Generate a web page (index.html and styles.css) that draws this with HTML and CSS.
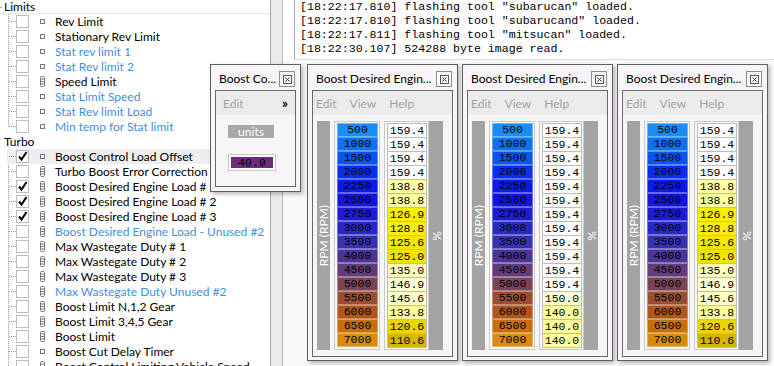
FILE: index.html
```html
<!DOCTYPE html>
<html lang="en">
<head>
  <meta charset="UTF-8" />
  <title>Table editor</title>
  <link rel="stylesheet" href="styles.css">
</head>
<body>
<div class="app">

  <!-- Дерево таблиц -->
  <div class="tree">
    <div class="hdr hdr-first">Limits</div>
    <div class="grp">
      <div class="row"><span class="cb"></span><svg class="ico" width="5" height="5"><rect x=".5" y=".5" width="4" height="4" fill="#eef2f6" stroke="#6d7d8e"/></svg>Rev Limit</div>
      <div class="row"><span class="cb"></span><svg class="ico" width="5" height="5"><rect x=".5" y=".5" width="4" height="4" fill="#eef2f6" stroke="#6d7d8e"/></svg>Stationary Rev Limit</div>
      <div class="row blue"><span class="cb"></span><svg class="ico" width="5" height="5"><rect x=".5" y=".5" width="4" height="4" fill="#eef2f6" stroke="#6d7d8e"/></svg>Stat rev limit 1</div>
      <div class="row blue"><span class="cb"></span><svg class="ico" width="5" height="5"><rect x=".5" y=".5" width="4" height="4" fill="#eef2f6" stroke="#6d7d8e"/></svg>Stat Rev limit 2</div>
      <div class="row"><span class="cb"></span><svg class="ico" width="5" height="11"><rect x=".5" y=".5" width="4" height="10" rx="1" fill="#fff" stroke="#777"/><path d="M1 3h3M1 5.5h3M1 8h3" stroke="#777"/></svg>Speed Limit</div>
      <div class="row blue"><span class="cb"></span><svg class="ico" width="5" height="5"><rect x=".5" y=".5" width="4" height="4" fill="#eef2f6" stroke="#6d7d8e"/></svg>Stat Limit Speed</div>
      <div class="row blue"><span class="cb"></span><svg class="ico" width="5" height="5"><rect x=".5" y=".5" width="4" height="4" fill="#eef2f6" stroke="#6d7d8e"/></svg>Stat Rev limit Load</div>
      <div class="row blue"><span class="cb"></span><svg class="ico" width="5" height="5"><rect x=".5" y=".5" width="4" height="4" fill="#eef2f6" stroke="#6d7d8e"/></svg>Min temp for Stat limit</div>
    </div>
    <div class="hdr">Turbo</div>
    <div class="grp">
      <div class="row sel"><span class="cb"><svg width="11" height="11"><path d="M2 5.5l2.5 3L9.5 1" fill="none" stroke="#000" stroke-width="2"/></svg></span><svg class="ico" width="5" height="5"><rect x=".5" y=".5" width="4" height="4" fill="#eef2f6" stroke="#6d7d8e"/></svg>Boost Control Load Offset</div>
      <div class="row"><span class="cb"></span><svg class="ico" width="5" height="11"><rect x=".5" y=".5" width="4" height="10" rx="1" fill="#fff" stroke="#777"/><path d="M1 3h3M1 5.5h3M1 8h3" stroke="#777"/></svg>Turbo Boost Error Correction</div>
      <div class="row"><span class="cb"><svg width="11" height="11"><path d="M2 5.5l2.5 3L9.5 1" fill="none" stroke="#000" stroke-width="2"/></svg></span><svg class="ico" width="5" height="11"><rect x=".5" y=".5" width="4" height="10" rx="1" fill="#fff" stroke="#777"/><path d="M1 3h3M1 5.5h3M1 8h3" stroke="#777"/></svg>Boost Desired Engine Load # 1</div>
      <div class="row"><span class="cb"><svg width="11" height="11"><path d="M2 5.5l2.5 3L9.5 1" fill="none" stroke="#000" stroke-width="2"/></svg></span><svg class="ico" width="5" height="11"><rect x=".5" y=".5" width="4" height="10" rx="1" fill="#fff" stroke="#777"/><path d="M1 3h3M1 5.5h3M1 8h3" stroke="#777"/></svg>Boost Desired Engine Load # 2</div>
      <div class="row"><span class="cb"><svg width="11" height="11"><path d="M2 5.5l2.5 3L9.5 1" fill="none" stroke="#000" stroke-width="2"/></svg></span><svg class="ico" width="5" height="11"><rect x=".5" y=".5" width="4" height="10" rx="1" fill="#fff" stroke="#777"/><path d="M1 3h3M1 5.5h3M1 8h3" stroke="#777"/></svg>Boost Desired Engine Load # 3</div>
      <div class="row blue"><span class="cb"></span><svg class="ico" width="5" height="11"><rect x=".5" y=".5" width="4" height="10" rx="1" fill="#fff" stroke="#777"/><path d="M1 3h3M1 5.5h3M1 8h3" stroke="#777"/></svg>Boost Desired Engine Load - Unused #2</div>
      <div class="row"><span class="cb"></span><svg class="ico" width="5" height="11"><rect x=".5" y=".5" width="4" height="10" rx="1" fill="#fff" stroke="#777"/><path d="M1 3h3M1 5.5h3M1 8h3" stroke="#777"/></svg>Max Wastegate Duty # 1</div>
      <div class="row"><span class="cb"></span><svg class="ico" width="5" height="11"><rect x=".5" y=".5" width="4" height="10" rx="1" fill="#fff" stroke="#777"/><path d="M1 3h3M1 5.5h3M1 8h3" stroke="#777"/></svg>Max Wastegate Duty # 2</div>
      <div class="row"><span class="cb"></span><svg class="ico" width="5" height="11"><rect x=".5" y=".5" width="4" height="10" rx="1" fill="#fff" stroke="#777"/><path d="M1 3h3M1 5.5h3M1 8h3" stroke="#777"/></svg>Max Wastegate Duty # 3</div>
      <div class="row blue"><span class="cb"></span><svg class="ico" width="5" height="11"><rect x=".5" y=".5" width="4" height="10" rx="1" fill="#fff" stroke="#777"/><path d="M1 3h3M1 5.5h3M1 8h3" stroke="#777"/></svg>Max Wastegate Duty Unused #2</div>
      <div class="row"><span class="cb"></span><svg class="ico" width="5" height="11"><rect x=".5" y=".5" width="4" height="10" rx="1" fill="#fff" stroke="#777"/><path d="M1 3h3M1 5.5h3M1 8h3" stroke="#777"/></svg>Boost Limit N,1,2 Gear</div>
      <div class="row"><span class="cb"></span><svg class="ico" width="5" height="11"><rect x=".5" y=".5" width="4" height="10" rx="1" fill="#fff" stroke="#777"/><path d="M1 3h3M1 5.5h3M1 8h3" stroke="#777"/></svg>Boost Limit 3,4,5 Gear</div>
      <div class="row"><span class="cb"></span><svg class="ico" width="5" height="11"><rect x=".5" y=".5" width="4" height="10" rx="1" fill="#fff" stroke="#777"/><path d="M1 3h3M1 5.5h3M1 8h3" stroke="#777"/></svg>Boost Limit</div>
      <div class="row"><span class="cb"></span><svg class="ico" width="5" height="5"><rect x=".5" y=".5" width="4" height="4" fill="#eef2f6" stroke="#6d7d8e"/></svg>Boost Cut Delay Timer</div>
      <div class="row"><span class="cb"></span><svg class="ico" width="5" height="11"><rect x=".5" y=".5" width="4" height="10" rx="1" fill="#fff" stroke="#777"/><path d="M1 3h3M1 5.5h3M1 8h3" stroke="#777"/></svg>Boost Control Limiting Vehicle Speed</div>
    </div>
  </div>

  <div class="splitter"></div>

  <div class="main">
    <div class="top">
      <div class="log">[18:22:17.810] flashing tool "subarucan" loaded.
[18:22:17.810] flashing tool "subarucand" loaded.
[18:22:17.811] flashing tool "mitsucan" loaded.
[18:22:30.107] 524288 byte image read.</div>
    </div>

    <!-- Окна таблиц -->
    <div class="desk">

      <div class="win win-1">
        <div class="win-title"><span class="win-name">Boost Desired Engin...</span><span class="win-close"><svg width="9" height="9"><rect x=".5" y=".5" width="8" height="8" fill="none" stroke="#555"/><path d="M2.5 2.5l4 4M6.5 2.5l-4 4" stroke="#333"/></svg></span></div>
        <div class="panel">
          <div class="menu"><span>Edit</span><span>View</span><span>Help</span></div>
          <div class="grid">
            <div class="axis"><span>RPM (RPM)</span></div>
            <div class="col rpm">
              <div>500</div><div>1000</div><div>1500</div><div>2000</div><div>2250</div><div>2500</div><div>2750</div><div>3000</div><div>3500</div><div>4000</div><div>4500</div><div>5000</div><div>5500</div><div>6000</div><div>6500</div><div>7000</div>
            </div>
            <div class="col vals">
              <div>159.4</div><div>159.4</div><div>159.4</div><div>159.4</div><div class="y1388">138.8</div><div class="y1388">138.8</div><div class="y1269">126.9</div><div class="y1288">128.8</div><div class="y1256">125.6</div><div class="y1250">125.0</div><div class="y1350">135.0</div><div class="y1469">146.9</div><div class="y1456">145.6</div><div class="y1338">133.8</div><div class="y1206">120.6</div><div class="y1106">110.6</div>
            </div>
            <div class="axis axis-r"><span>%</span></div>
          </div>
        </div>
      </div>

      <div class="win win-2">
        <div class="win-title"><span class="win-name">Boost Desired Engin...</span><span class="win-close"><svg width="9" height="9"><rect x=".5" y=".5" width="8" height="8" fill="none" stroke="#555"/><path d="M2.5 2.5l4 4M6.5 2.5l-4 4" stroke="#333"/></svg></span></div>
        <div class="panel">
          <div class="menu"><span>Edit</span><span>View</span><span>Help</span></div>
          <div class="grid">
            <div class="axis"><span>RPM (RPM)</span></div>
            <div class="col rpm">
              <div>500</div><div>1000</div><div>1500</div><div>2000</div><div>2250</div><div>2500</div><div>2750</div><div>3000</div><div>3500</div><div>4000</div><div>4500</div><div>5000</div><div>5500</div><div>6000</div><div>6500</div><div>7000</div>
            </div>
            <div class="col vals">
              <div>159.4</div><div>159.4</div><div>159.4</div><div>159.4</div><div>159.4</div><div>159.4</div><div>159.4</div><div>159.4</div><div>159.4</div><div>159.4</div><div>159.4</div><div>159.4</div><div class="y1500">150.0</div><div class="y1400">140.0</div><div class="y1400">140.0</div><div class="y1400">140.0</div>
            </div>
            <div class="axis axis-r"><span>%</span></div>
          </div>
        </div>
      </div>

      <div class="win win-3">
        <div class="win-title"><span class="win-name">Boost Desired Engin...</span><span class="win-close"><svg width="9" height="9"><rect x=".5" y=".5" width="8" height="8" fill="none" stroke="#555"/><path d="M2.5 2.5l4 4M6.5 2.5l-4 4" stroke="#333"/></svg></span></div>
        <div class="panel">
          <div class="menu"><span>Edit</span><span>View</span><span>Help</span></div>
          <div class="grid">
            <div class="axis"><span>RPM (RPM)</span></div>
            <div class="col rpm">
              <div>500</div><div>1000</div><div>1500</div><div>2000</div><div>2250</div><div>2500</div><div>2750</div><div>3000</div><div>3500</div><div>4000</div><div>4500</div><div>5000</div><div>5500</div><div>6000</div><div>6500</div><div>7000</div>
            </div>
            <div class="col vals">
              <div>159.4</div><div>159.4</div><div>159.4</div><div>159.4</div><div class="y1388">138.8</div><div class="y1388">138.8</div><div class="y1269">126.9</div><div class="y1288">128.8</div><div class="y1256">125.6</div><div class="y1250">125.0</div><div class="y1350">135.0</div><div class="y1469">146.9</div><div class="y1456">145.6</div><div class="y1338">133.8</div><div class="y1206">120.6</div><div class="y1106">110.6</div>
            </div>
            <div class="axis axis-r"><span>%</span></div>
          </div>
        </div>
      </div>

    </div>
  </div>

  <!-- Маленькое окно скаляра -->
  <div class="win win-small">
    <div class="win-title"><span class="win-name">Boost Co...</span><span class="win-close"><svg width="9" height="9"><rect x=".5" y=".5" width="8" height="8" fill="none" stroke="#555"/><path d="M2.5 2.5l4 4M6.5 2.5l-4 4" stroke="#333"/></svg></span></div>
    <div class="panel">
      <div class="menu menu-small"><span>Edit</span><b>&raquo;</b></div>
      <div class="scalar">
        <div class="units">units</div>
        <div class="value"><span>40.0</span></div>
      </div>
    </div>
  </div>

</div>
</body>
</html>
```

FILE: styles.css
```css
body {
  margin: 0;
  font-family: Lato, "Liberation Sans", sans-serif;
  font-size: 12px;
  color: #000;
}

.app {
  position: relative;
  display: flex;
  width: 774px;
  height: 366px;
  overflow: hidden;
  background: #fff;
}

/* дерево */
.tree {
  width: 270px;
  border-right: 1px solid #a9a9a9;
  margin-top: -1px;
  flex-shrink: 0;
}

.hdr {
  height: 15px;
  line-height: 15px;
  padding-left: 4px;
}

.hdr-first {
  box-shadow: inset 0 -1px 0 #e8e8e8;
  background: linear-gradient(#aaa, #aaa) 0 8px / 2px 1px no-repeat;
}

.grp {
  background: repeating-linear-gradient(180deg, #9a9a9a 0 1px, transparent 1px 2px) 8px 0 / 1px calc(100% - 7px) no-repeat;
}

.row {
  display: flex;
  align-items: center;
  height: 15px;
  padding-left: 16px;
  white-space: nowrap;
  background: repeating-linear-gradient(90deg, #9a9a9a 0 1px, transparent 1px 2px) 9px 7px / 7px 1px no-repeat;
}

.row.sel {
  background:
    repeating-linear-gradient(90deg, #9a9a9a 0 1px, transparent 1px 2px) 9px 7px / 7px 1px no-repeat,
    linear-gradient(#eeeeee, #eeeeee) 7px 0 / 100% 100% no-repeat;
}

.row.blue {
  color: #3f8fdc;
}

.cb {
  display: flex;
  align-items: center;
  justify-content: center;
  width: 11px;
  height: 11px;
  border: 1px solid #bdbdbd;
  background: #fff;
  margin-right: 11px;
}

.ico {
  display: block;
  margin-right: 10px;
}

.splitter {
  width: 11px;
  flex-shrink: 0;
  background: #eaeaea;
  border-right: 1px solid #bcbcbc;
}

.main {
  flex: 1;
  display: flex;
  flex-direction: column;
}

.top {
  height: 60px;
  display: flex;
  padding-left: 11px;
  background: #fff;
}

.log {
  flex: 1;
  border-left: 1px solid #a6a6a6;
  border-bottom: 1px solid #dadada;
  padding-left: 5px;
  font-family: "Liberation Mono", monospace;
  font-size: 11.6px;
  line-height: 14px;
  white-space: pre;
}

.desk {
  flex: 1;
  position: relative;
  background: #f9f9f9;
}

/* окна */
.win {
  position: absolute;
  top: 4px;
  width: 149px;
  height: 295px;
  display: flex;
  flex-direction: column;
  background: #f8f4f9;
  border: 1px solid #5f5f5f;
  box-shadow: 2px 2px 4px rgba(0, 0, 0, 0.28);
}

.win-1 { left: 24px; }
.win-2 { left: 179px; }
.win-3 { left: 334px; }

.win-small {
  left: 210px;
  top: 64px;
  width: 89px;
  height: 126px;
}

.win-title {
  height: 24px;
  display: flex;
  align-items: center;
  justify-content: space-between;
  padding: 1px 5px 0 8px;
  flex-shrink: 0;
}

.win-close {
  display: flex;
  align-items: center;
  justify-content: center;
  width: 14px;
  height: 14px;
  margin-top: 2px;
  border: 1px solid #8c8c8c;
  background: #fbfbfb;
}

.panel {
  flex: 1;
  margin: 0 4px 4px;
  border: 1px solid #6a6a6a;
  background: #f6f6f6;
  display: flex;
  flex-direction: column;
}

.menu {
  height: 24px;
  display: flex;
  align-items: center;
  gap: 13px;
  padding-left: 3px;
  background: #ebebeb;
  color: #a2a2a2;
}

.menu-small {
  justify-content: space-between;
  padding: 0 7px 0 7px;
}

.menu-small b {
  color: #000;
  font-size: 13px;
}

.grid {
  display: flex;
  padding: 6px 8px 6px 4px;
}

.axis {
  width: 13px;
  background: #a3a3a3;
  display: flex;
  align-items: center;
  justify-content: center;
  color: #fff;
  margin-right: 4px;
}

.axis span {
  writing-mode: vertical-rl;
  transform: rotate(180deg);
  white-space: nowrap;
}

.axis-r {
  width: 14px;
  margin-right: 0;
}

.col {
  border: 1px solid #c9c9c9;
  padding: 1px 1px 1px 2px;
  background: #f9f9f9;
  font-family: "Liberation Mono", monospace;
  font-size: 11.5px;
  text-align: center;
}

.col div {
  height: 14px;
  line-height: 14px;
  box-sizing: border-box;
}

.rpm {
  margin-right: 4px;
}

.rpm div {
  width: 41px;
  border: 1px solid rgba(255, 255, 255, 0.35);
  line-height: 12px;
}

.vals div {
  width: 40px;
  background: #fff;
  border: 1px solid #bcbcbc;
  border-bottom: none;
  line-height: 13px;
}

.vals div:last-child {
  border-bottom: 1px solid #bcbcbc;
  height: 15px;
}

.rpm div:nth-child(1) { background: #1a8ef8; }
.rpm div:nth-child(2) { background: #0f70f0; }
.rpm div:nth-child(3) { background: #0a54ee; }
.rpm div:nth-child(4) { background: #0a2ef0; }
.rpm div:nth-child(5) { background: #0c18ec; }
.rpm div:nth-child(6) { background: #1414e2; }
.rpm div:nth-child(7) { background: #1c1cd6; }
.rpm div:nth-child(8) { background: #2828c6; }
.rpm div:nth-child(9) { background: #3832b0; }
.rpm div:nth-child(10) { background: #4a3494; }
.rpm div:nth-child(11) { background: #633c7c; }
.rpm div:nth-child(12) { background: #7a4456; }
.rpm div:nth-child(13) { background: #9a4f34; }
.rpm div:nth-child(14) { background: #b0561a; }
.rpm div:nth-child(15) { background: #c86e08; }
.rpm div:nth-child(16) { background: #d88c08; }

.vals .y1500 { background: #ffffd6; }
.vals .y1469 { background: #ffffd8; }
.vals .y1456 { background: #ffffcc; }
.vals .y1400 { background: #ffff9c; }
.vals .y1388 { background: #ffffa4; }
.vals .y1350 { background: #fffac0; }
.vals .y1338 { background: #fff9a0; }
.vals .y1288 { background: #f8ec18; }
.vals .y1269 { background: #f8ee00; }
.vals .y1256 { background: #f3e600; }
.vals .y1250 { background: #f2e200; }
.vals .y1206 { background: #ecd400; }
.vals .y1106 { background: #d8b400; }

/* скаляр */
.scalar {
  padding: 10px 0 0 12px;
}

.units {
  width: 46px;
  height: 13px;
  line-height: 13px;
  background: #a8a8a8;
  color: #fff;
  text-align: center;
}

.value {
  width: 42px;
  margin-top: 16px;
  border: 1px solid #c9c9c9;
  padding: 2px;
  background: #fafafa;
}

.value span {
  display: block;
  height: 11px;
  line-height: 11px;
  background: #6b2c7b;
  font-family: "Liberation Mono", monospace;
  font-size: 11.5px;
  text-align: center;
}
```
